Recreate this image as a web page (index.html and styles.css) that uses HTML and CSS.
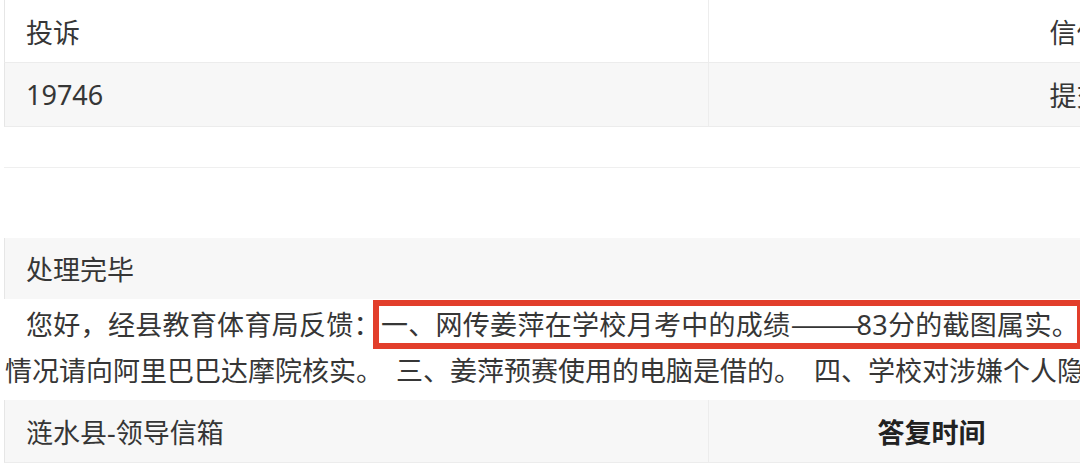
FILE: index.html
```html
<!DOCTYPE html>
<html lang="zh-CN">
<head>
    <meta charset="UTF-8">
    <meta name="viewport" content="width=device-width, initial-scale=1.0">
    <title>领导信箱 - 信件详情</title>
    <link rel="stylesheet" href="styles.css">
</head>
<body>

    <div class="page">
        <!-- Letter info -->
        <div class="info-table">
            <div class="row">
                <div class="cell">投诉</div>
                <div class="cell wide">信件类型</div>
            </div>
            <div class="row gray">
                <div class="cell">19746</div>
                <div class="cell wide">提交时间</div>
            </div>
        </div>

        <div class="spacer"></div>

        <!-- Reply -->
        <div class="reply-table">
            <div class="row gray status">
                <div class="cell">处理完毕</div>
            </div>
            <div class="reply">
                <p class="line first">您好，经县教育体育局反馈：<span class="mark">一、网传姜萍在学校月考中的成绩<span class="dash"><span>——</span></span>83分的截图属实。</span>二、关于姜萍数学竞赛的成绩和相关</p>
                <p class="line second">情况请向阿里巴巴达摩院核实。 三、姜萍预赛使用的电脑是借的。 四、学校对涉嫌个人隐私泄露的问题</p>
            </div>
            <div class="row gray">
                <div class="cell">涟水县-领导信箱</div>
                <div class="cell head">答复时间</div>
            </div>
        </div>
    </div>

</body>
</html>
```

FILE: styles.css
```css
body {
    margin: 0;
    background: #fff;
    color: #363636;
    font-family: "Noto Sans", "Noto Sans CJK SC", sans-serif;
    font-size: 27px;
    overflow: hidden;
}
.page {
    width: 1600px;
    padding-left: 4px;
}
.row {
    display: flex;
    height: 62px;
    border-bottom: 1px solid #ececec;
    border-left: 1px solid #e6e6e6;
}
.gray {
    background: #f7f7f7;
}
.cell {
    display: flex;
    align-items: center;
    width: 703px;
    padding-left: 21px;
    box-sizing: border-box;
}
.cell.wide {
    width: 790px;
    justify-content: center;
    padding-left: 0;
    border-left: 1px solid #ededed;
}
.info-table .row.gray {
    height: 63px;
}
.spacer {
    height: 40px;
    border-bottom: 1px solid #efefef;
    margin-bottom: 70px;
}
.status {
    height: 61px;
    border-bottom: none;
}
.reply {
    padding: 3px 0 6px 1px;
    background: #fff;
}
.line {
    margin: 0;
    height: 46px;
    line-height: 46px;
    white-space: nowrap;
}
.line.first {
    text-indent: 21px;
    letter-spacing: 0.3px;
}
.line.second {
    word-spacing: 6px;
}
.mark {
    position: relative;
}
/* red highlight box drawn over the text */
.mark::after {
    content: "";
    position: absolute;
    left: -8px;
    right: -4px;
    top: -6px;
    bottom: -6px;
    border: 6px solid #e23e2b;
}
.dash {
    display: inline-block;
    width: 66px;
    line-height: 1;
    text-indent: 0;
    letter-spacing: 0;
    font-family: "Noto Sans CJK SC", sans-serif;
}
.dash span {
    display: inline-block;
    transform: scaleX(1.6);
    transform-origin: left center;
}
.cell.head {
    width: 446px;
    justify-content: center;
    padding-left: 0;
    font-weight: bold;
    color: #222;
    border-left: 1px solid #ececec;
}
```
